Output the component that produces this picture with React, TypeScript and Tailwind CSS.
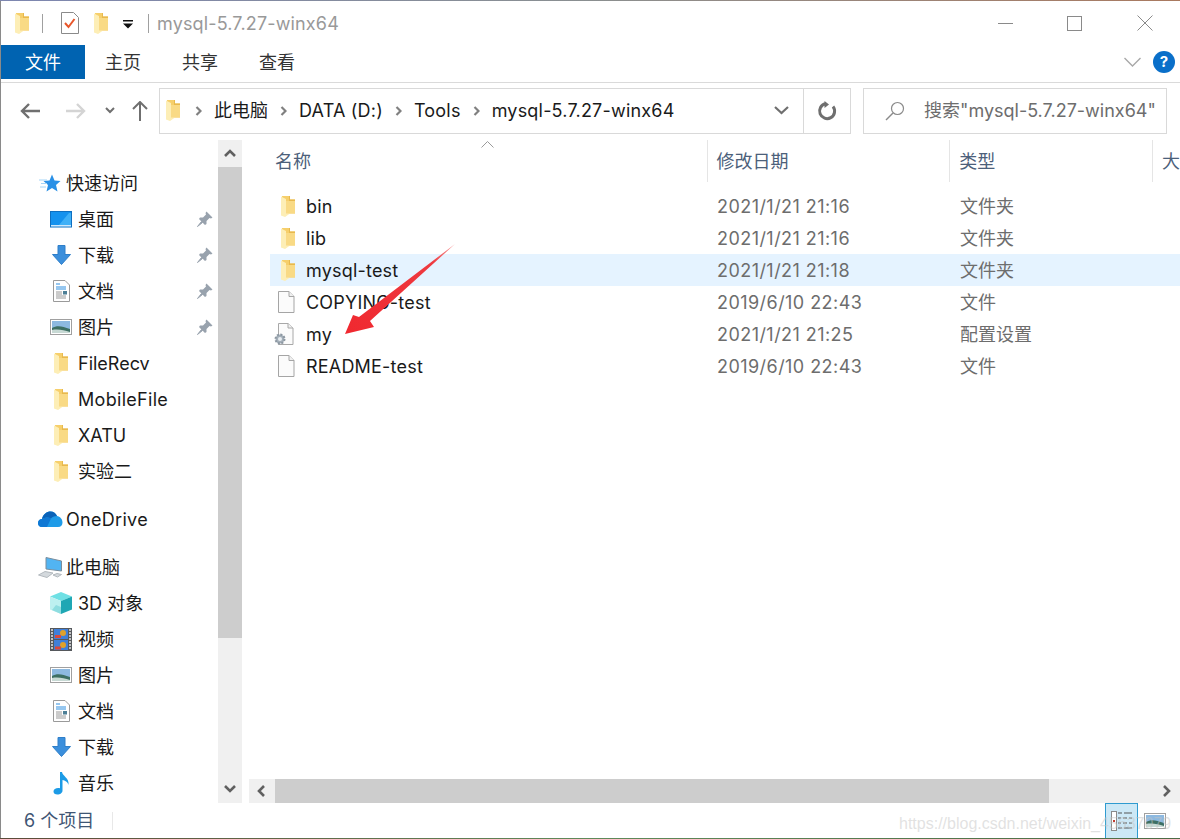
import React from 'react';

const FolderIcon = ({ className = '' }: { className?: string }) => (
  <svg width="14" height="21" viewBox="0 0 14 21" className={className}>
    <path d="M1 0H9V3.5H14V17.5H2Z" fill="#f6cf6b" />
    <path d="M9 0V3.5H14V5H8V0Z" fill="#e8b94e" />
    <path d="M0 0.5L5 3V19L5 17.5H9L4 21L0 19.5Z" fill="#fdeeb6" />
    <path d="M4 17.5H14V5H5V17.5Z" fill="#f9da85" />
  </svg>
);

const PlainFileIcon = () => (
  <svg width="18" height="22" viewBox="0 0 18 22">
    <path d="M1.5 0.5H12L17 5.5V21.5H1.5Z" fill="#fbfbfb" stroke="#a5a5a5" />
    <path d="M12 0.5V5.5H17" fill="#f0f0f0" stroke="#a5a5a5" />
  </svg>
);

const ConfigFileIcon = () => (
  <svg width="22" height="24" viewBox="0 0 22 24">
    <path d="M5.5 1.5H15L20 6V22.5H5.5Z" fill="#fbfbfb" stroke="#a8a8a8" />
    <path d="M15 1.5V6H20" fill="#f0f0f0" stroke="#a8a8a8" />
    <circle cx="7" cy="17" r="4.5" fill="#a3aeb8" stroke="#8c97a1" strokeWidth="2" strokeDasharray="2 1.5" />
    <circle cx="7" cy="17" r="2" fill="#e8edf1" />
  </svg>
);

const DesktopIcon = () => (
  <svg width="22" height="17" viewBox="0 0 22 17">
    <rect x="0.5" y="0.5" width="21" height="15.5" fill="#1592ee" stroke="#0f6fc0" />
    <path d="M9 14L19 2H21V14Z" fill="#3fb0f7" />
    <rect x="1" y="14" width="20" height="1.5" fill="#cfe8fb" />
  </svg>
);

const DownloadIcon = () => (
  <svg width="19" height="20" viewBox="0 0 19 20">
    <path d="M6 0.5H13V9.5H18.5L9.5 19.5L0.5 9.5H6Z" fill="#3b8fdc" stroke="#2f7fc9" />
  </svg>
);

const DocIcon = () => (
  <svg width="17" height="22" viewBox="0 0 17 22">
    <path d="M0.5 0.5H12L16.5 5V21.5H0.5Z" fill="#fff" stroke="#9a9a9a" />
    <path d="M3 4H7M3 7H13M3 9H13" stroke="#2f8fe0" strokeWidth="1" />
    <path d="M3 12H9M3 14H9M3 16H13M3 18H13" stroke="#9a9a9a" strokeWidth="1" />
    <rect x="10" y="11" width="4" height="3.5" fill="#4d7f96" />
  </svg>
);

const PictureIcon = () => (
  <svg width="22" height="16" viewBox="0 0 22 16">
    <rect x="0.5" y="0.5" width="21" height="15" fill="#fff" stroke="#a0a0a0" />
    <rect x="2" y="2" width="18" height="12" fill="#8db9e0" />
    <path d="M2 9C7 6 12 7 20 10V14H2Z" fill="#3d6f63" />
    <path d="M2 11C8 10 14 11 20 13V14H2Z" fill="#c7d9d4" />
  </svg>
);

const PinIcon = () => (
  <svg width="16" height="16" viewBox="0 0 16 16">
    <path d="M9.5 0.5L15.5 6.5L14 7.5L12.5 7L9.5 10L9.5 13L8 14L2 8L3 6.5L6 6.5L9 3.5L8.5 2Z" fill="#98a2ad" />
    <path d="M4.5 10.5L0.5 15.5L5.5 11.5Z" fill="#98a2ad" stroke="#98a2ad" />
  </svg>
);

const StarIcon = () => (
  <svg width="22" height="18" viewBox="0 0 22 18">
    <path d="M13 0.5L15.5 6.5L21.5 7L17 11L18.5 17.5L13 14L7.5 17.5L9 11L4.5 7L10.5 6.5Z" fill="#2a90e6" />
    <path d="M0 6H8M2 9.5H8M1 13H7" stroke="#a5d4f7" strokeWidth="1" />
  </svg>
);

const CloudIcon = () => (
  <svg width="25" height="16" viewBox="0 0 25 16">
    <path d="M4 16C1 16 0 14 0 12C0 9.5 2 8 4 8C5 3 9 0.5 12.5 0.5C15.5 0.5 18 2.5 19 5C22 5.5 24.5 8 24.5 11.5C24.5 14 23 16 20 16Z" fill="#1e9be8" />
    <path d="M4 8C5 3 9 0.5 12.5 0.5C15.5 0.5 18 2.5 19 5C16 5 14 6 13 7.5C10 5.5 6 6.5 4 8Z" fill="#0a62b8" />
    <path d="M0 12C0 9.5 2 8 4 8C6 6.5 10 5.5 13 7.5L9 16H4C1 16 0 14 0 12Z" fill="#0f78d4" />
  </svg>
);

const ComputerIcon = () => (
  <svg width="24" height="21" viewBox="0 0 24 21">
    <path d="M8 0.5L23.5 4V14L8 12Z" fill="#52b4f2" stroke="#7a8d9c" />
    <path d="M0.5 18L7 14.5L15 16L9 20.5Z" fill="#d4d9dd" stroke="#b3b9be" />
    <path d="M15 18L19 16.5L23.5 17.5L19.5 20Z" fill="#d4d9dd" stroke="#b3b9be" />
  </svg>
);

const CubeIcon = () => (
  <svg width="22" height="22" viewBox="0 0 22 22">
    <path d="M11 0L22 4.5L11 9L0 4.5Z" fill="#6fe0e4" />
    <path d="M0 4.5L11 9V22L0 17.5Z" fill="#bdf0f0" />
    <path d="M11 9L22 4.5V17.5L11 22Z" fill="#1fa7b4" />
    <path d="M6 13L11 15V22L2 18Z" fill="#8fdde0" />
  </svg>
);

const FilmIcon = () => (
  <svg width="22" height="23" viewBox="0 0 22 23">
    <rect width="22" height="23" fill="#55585c" />
    <rect x="4" y="1" width="14" height="10" fill="#3f7fd9" />
    <rect x="4" y="12" width="14" height="10" fill="#3f7fd9" />
    <circle cx="13" cy="5" r="3" fill="#e0a12a" />
    <circle cx="13" cy="17" r="3" fill="#e0a12a" />
    <rect x="5" y="7" width="6" height="3" fill="#d9483b" />
    <rect x="5" y="18.5" width="6" height="3" fill="#d9483b" />
    <path d="M1 2H3M1 5H3M1 8H3M1 11H3M1 14H3M1 17H3M1 20H3M19 2H21M19 5H21M19 8H21M19 11H21M19 14H21M19 17H21M19 20H21" stroke="#e4e4e4" strokeWidth="1.5" />
  </svg>
);

const MusicIcon = () => (
  <svg width="17" height="23" viewBox="0 0 17 23">
    <path d="M7 0H9C9.5 4 16.5 6 15.5 13C14.5 9.5 12 8.5 9.5 8V18.5C9.5 21 7 22.5 4.5 22.5C2 22.5 0.5 21.5 0.5 19.5C0.5 17 3.5 15.5 7 16.2Z" fill="#1c9be6" />
  </svg>
);

// thick grey chevron used between breadcrumb segments
const Crumb = () => (
  <svg width="7" height="10" viewBox="0 0 7 10" className="shrink-0">
    <path d="M1.5 1L5.5 5L1.5 9" fill="none" stroke="#808080" strokeWidth="2.2" />
  </svg>
);

const Chevron = ({ dir, color = '#606060' }: { dir: 'up' | 'down' | 'left' | 'right'; color?: string }) => {
  const d = { up: 'M1 8L6 3L11 8', down: 'M1 3L6 8L11 3', left: 'M8 1L3 6L8 11', right: 'M4 1L9 6L4 11' }[dir];
  return (
    <svg width="12" height="12" viewBox="0 0 12 12">
      <path d={d} fill="none" stroke={color} strokeWidth="2.6" />
    </svg>
  );
};

type NavItem = { label: string; icon: React.ReactNode; pinned?: boolean; top?: boolean; gap?: boolean; latin?: boolean };

const navItems: NavItem[] = [
  { label: '快速访问', icon: <StarIcon />, top: true },
  { label: '桌面', icon: <DesktopIcon />, pinned: true },
  { label: '下载', icon: <DownloadIcon />, pinned: true },
  { label: '文档', icon: <DocIcon />, pinned: true },
  { label: '图片', icon: <PictureIcon />, pinned: true },
  { label: 'FileRecv', icon: <FolderIcon /> },
  { label: 'MobileFile', icon: <FolderIcon />, latin: true },
  { label: 'XATU', icon: <FolderIcon /> },
  { label: '实验二', icon: <FolderIcon /> },
  { label: 'OneDrive', icon: <CloudIcon />, top: true, gap: true, latin: true },
  { label: '此电脑', icon: <ComputerIcon />, top: true, gap: true },
  { label: '3D 对象', icon: <CubeIcon /> },
  { label: '视频', icon: <FilmIcon /> },
  { label: '图片', icon: <PictureIcon /> },
  { label: '文档', icon: <DocIcon /> },
  { label: '下载', icon: <DownloadIcon /> },
  { label: '音乐', icon: <MusicIcon /> },
];

const files = [
  { name: 'bin', date: '2021/1/21 21:16', type: '文件夹', icon: <FolderIcon /> },
  { name: 'lib', date: '2021/1/21 21:16', type: '文件夹', icon: <FolderIcon /> },
  { name: 'mysql-test', date: '2021/1/21 21:18', type: '文件夹', icon: <FolderIcon />, active: true },
  { name: 'COPYING-test', date: '2019/6/10 22:43', type: '文件', icon: <PlainFileIcon /> },
  { name: 'my', date: '2021/1/21 21:25', type: '配置设置', icon: <ConfigFileIcon /> },
  { name: 'README-test', date: '2019/6/10 22:43', type: '文件', icon: <PlainFileIcon /> },
];

const ribbonTabs = ['主页', '共享', '查看'];

export default function App() {
  return (
    <div
      className="relative flex h-[839px] w-[1180px] flex-col overflow-hidden bg-white text-[18px] text-[#1a1a1a]"
      style={{ fontFamily: 'Inter, "Noto Sans CJK SC", sans-serif' }}
    >
      {/* sliver of desktop wallpaper behind the window */}
      <div className="h-px w-full shrink-0 bg-gradient-to-r from-[#7d86b0] via-[#8a8f90] to-[#a9795f]" />

      <div className="flex min-h-0 flex-1 flex-col border-l border-[#8a8a8a]">
        {/* title bar */}
        <div className="flex h-[44px] shrink-0 items-center">
          <FolderIcon className="ml-[14px]" />
          <div className="ml-[13px] h-[19px] w-px bg-[#a0a0a0]" />
          <svg width="18" height="22" viewBox="0 0 18 22" className="ml-[18px]">
            <path d="M0.5 0.5H12.5L17.5 5.5V21.5H0.5Z" fill="#fff" stroke="#8a8a8a" />
            <path d="M4 11L7.5 15L13.5 7" fill="none" stroke="#e8562a" strokeWidth="2" />
          </svg>
          <FolderIcon className="ml-[15px]" />
          <svg width="10" height="9" viewBox="0 0 10 9" className="ml-[15px] mt-[3px]">
            <path d="M0 0H10V1.5H0ZM0 3.5H10L5 8.5Z" fill="#111" />
          </svg>
          <div className="ml-[15px] h-[19px] w-px bg-[#a0a0a0]" />
          <span className="ml-[8px] tracking-[0.15px] text-[#999]">mysql-5.7.27-winx64</span>
          <div className="ml-auto flex items-center">
            <div className="h-px w-[15px] bg-[#8a8a8a]" />
            <div className="ml-[54px] h-[15px] w-[15px] border border-[#8a8a8a]" />
            <svg width="16" height="16" viewBox="0 0 16 16" className="ml-[55px] mr-[27px]">
              <path d="M0.5 0.5L15.5 15.5M15.5 0.5L0.5 15.5" stroke="#8a8a8a" strokeWidth="1" />
            </svg>
          </div>
        </div>

        {/* ribbon tabs */}
        <div className="flex h-[38px] shrink-0 items-start border-b border-[#dadada]">
          <div className="flex h-[34px] w-[84px] items-center justify-center bg-[#0063b1] pt-px text-white">文件</div>
          <div className="ml-[20px] flex h-[34px] gap-[41px] pt-px">
            {ribbonTabs.map(tab => (
              <span key={tab} className="flex items-center text-[#333]">{tab}</span>
            ))}
          </div>
          <div className="ml-auto mr-[5px] flex h-[34px] items-center">
            <svg width="17" height="10" viewBox="0 0 17 10">
              <path d="M0.5 1L8.5 9L16.5 1" fill="none" stroke="#a8a8a8" strokeWidth="1.4" />
            </svg>
            <div className="ml-[12px] flex h-[22px] w-[22px] items-center justify-center rounded-full bg-[#0a6fc9] text-[15px] font-bold text-white">?</div>
          </div>
        </div>

        {/* navigation row */}
        <div className="flex h-[57px] shrink-0 items-center pb-[2px]">
          <svg width="20" height="16" viewBox="0 0 20 16" className="ml-[19px]">
            <path d="M9 1L2 8L9 15M2 8H20" fill="none" stroke="#6f6f6f" strokeWidth="2.4" />
          </svg>
          <svg width="20" height="16" viewBox="0 0 20 16" className="ml-[26px]">
            <path d="M11 1L18 8L11 15M18 8H0" fill="none" stroke="#d4d4d4" strokeWidth="2.4" />
          </svg>
          <svg width="10" height="7" viewBox="0 0 10 7" className="ml-[19px]">
            <path d="M1 1L5 5L9 1" fill="none" stroke="#6f6f6f" strokeWidth="2" />
          </svg>
          <svg width="16" height="20" viewBox="0 0 16 20" className="ml-[17px]">
            <path d="M1 8L8 1L15 8M8 1V20" fill="none" stroke="#6f6f6f" strokeWidth="2" />
          </svg>

          <div className="ml-[11px] flex h-[46px] w-[692px] items-center border border-[#d9d9d9] pl-[6px]">
            <FolderIcon />
            <div className="ml-[15px] flex items-center gap-[12px] tracking-[0.2px]">
              <Crumb />
              <span className="tracking-normal">此电脑</span>
              <Crumb />
              <span>DATA (D:)</span>
              <Crumb />
              <span>Tools</span>
              <Crumb />
              <span>mysql-5.7.27-winx64</span>
            </div>
            <svg width="15" height="9" viewBox="0 0 15 9" className="ml-auto">
              <path d="M1 1L7.5 7L14 1" fill="none" stroke="#6f6f6f" strokeWidth="2.2" />
            </svg>
            <div className="ml-[14px] flex h-full w-[47px] items-center justify-center border-l border-[#d9d9d9]">
              <svg width="20" height="20" viewBox="0 0 20 20">
                <path d="M16 5.5A7.5 7.5 0 1 1 8.5 2.8" fill="none" stroke="#6f6f6f" strokeWidth="3" />
                <path d="M6.5 0V7L11 3.5Z" fill="#6f6f6f" transform="translate(1 0)" />
              </svg>
            </div>
          </div>

          <div className="ml-[12px] flex h-[46px] w-[304px] items-center border border-[#d9d9d9] pl-[21px]">
            <svg width="20" height="20" viewBox="0 0 20 20">
              <circle cx="12.5" cy="7.5" r="6" fill="none" stroke="#8a8a8a" strokeWidth="1.2" />
              <path d="M8 12L1 19" stroke="#8a8a8a" strokeWidth="1.4" />
            </svg>
            <span className="ml-[19px] whitespace-nowrap text-[#6d6d6d]">搜索"mysql-5.7.27-winx64"</span>
          </div>
        </div>

        {/* body: tree on the left, file list on the right */}
        <div className="flex min-h-0 flex-1">
          <div className="flex w-[217px] shrink-0 flex-col pt-[25px]">
            {navItems.map((item, i) => (
              <div key={i} className={`flex h-[36px] shrink-0 items-center ${item.gap ? 'mt-[12px]' : ''}`}>
                <div className={`flex justify-center ${item.top ? 'ml-[36px] w-[26px]' : 'ml-[49px] w-[22px]'}`}>{item.icon}</div>
                <span className={`whitespace-nowrap ${item.top ? 'ml-[3px]' : 'ml-[6px]'} ${item.latin ? 'tracking-[0.3px]' : ''}`}>{item.label}</span>
                {item.pinned && <span className="ml-auto mr-[5px] flex"><PinIcon /></span>}
              </div>
            ))}
          </div>

          {/* tree scrollbar */}
          <div className="flex w-[24px] shrink-0 flex-col bg-[#f0f0f0]">
            <div className="flex h-[27px] items-center justify-center"><Chevron dir="up" /></div>
            <div className="h-[471px] bg-[#cdcdcd]" />
            <div className="flex flex-1 items-end justify-center pb-[8px]"><Chevron dir="down" /></div>
          </div>

          <div className="ml-[7px] flex min-w-0 flex-1 flex-col">
            {/* column headers */}
            <div className="relative flex h-[42px] shrink-0 text-[#4c607a]">
              <div className="flex w-[459px] items-center border-r border-[#e5e5e5] pl-[26px]">名称</div>
              <div className="flex w-[243px] items-center border-r border-[#e5e5e5] pl-[9px]">修改日期</div>
              <div className="flex w-[203px] items-center border-r border-[#e5e5e5] pl-[9px]">类型</div>
              <div className="flex items-center overflow-hidden pl-[9px]">大</div>
              <svg width="13" height="7" viewBox="0 0 13 7" className="absolute left-[232px] top-[1px]">
                <path d="M0.5 6.5L6.5 0.5L12.5 6.5" fill="none" stroke="#9a9a9a" />
              </svg>
            </div>

            {/* file rows */}
            <div className="flex min-h-0 flex-1 flex-col pl-[21px] pt-[8px]">
              {files.map(file => (
                <div key={file.name} className={`flex h-[32px] shrink-0 items-center ${file.active ? 'bg-[#e5f3ff]' : ''}`}>
                  <div className="flex w-[36px] justify-end pr-[11px]">{file.icon}</div>
                  <span className="w-[411px] whitespace-nowrap tracking-[0.2px] text-[#1a1a1a]">{file.name}</span>
                  <span className="w-[243px] tracking-[0.45px] text-[#6d6d6d]">{file.date}</span>
                  <span className="text-[#6d6d6d]">{file.type}</span>
                </div>
              ))}
            </div>

            {/* horizontal scrollbar */}
            <div className="flex h-[24px] shrink-0 bg-[#f0f0f0]">
              <div className="flex w-[26px] items-center justify-center"><Chevron dir="left" /></div>
              <div className="w-[774px] bg-[#cdcdcd]" />
              <div className="ml-auto flex w-[26px] items-center justify-center pr-[2px]"><Chevron dir="right" /></div>
            </div>
          </div>
        </div>

        {/* status bar */}
        <div className="flex h-[35px] shrink-0 items-center pl-[23px] text-[#3f5674]">
          <span>6 个项目</span>
          <div className="ml-[18px] h-[18px] w-px bg-[#e8e8e8]" />
          <div className="ml-auto flex h-full items-center pr-[14px]">
            <div className="flex h-full w-[33px] items-center justify-center border-x border-t border-[#2f9bd0] bg-[#cce8f6]">
              <svg width="22" height="20" viewBox="0 0 22 20">
                <rect x="0.5" y="0.5" width="5" height="19" fill="#fff" stroke="#8a8a8a" />
                <rect x="2" y="9" width="2" height="2" fill="#c23b2e" />
                <path d="M7 2H11M13 2H21M7 7H10M12 7H16M18 7H21M7 12H10M12 12H16M18 12H21M7 17H11M13 17H21" stroke="#555" />
              </svg>
            </div>
            <div className="ml-[6px]"><PictureIcon /></div>
          </div>
        </div>
      </div>

      <div className="h-px w-full shrink-0 bg-gradient-to-r from-[#5b4a3a] via-[#5f8a5a] to-[#4d6b45]" />

      {/* hand-drawn annotation arrow over the list */}
      <svg width="120" height="100" viewBox="0 0 120 100" className="absolute left-[340px] top-[240px]">
        <defs>
          <linearGradient id="arrowFade" x1="1" y1="0" x2="0" y2="1">
            <stop offset="0" stopColor="#f7a0a0" />
            <stop offset="0.2" stopColor="#ee3a40" />
            <stop offset="1" stopColor="#f0282f" />
          </linearGradient>
        </defs>
        <path d="M115 4L30 81L34 87L5 94L13 75L19 77Z" fill="url(#arrowFade)" />
      </svg>

      {/* image host watermark */}
      <span className="pointer-events-none absolute left-[899px] top-[812px] whitespace-nowrap text-[16px] text-[#c4c4c4]/50" style={{ fontFamily: '"Liberation Sans", sans-serif' }}>
        https://blog.csdn.net/weixin_45637079
      </span>
    </div>
  );
}
